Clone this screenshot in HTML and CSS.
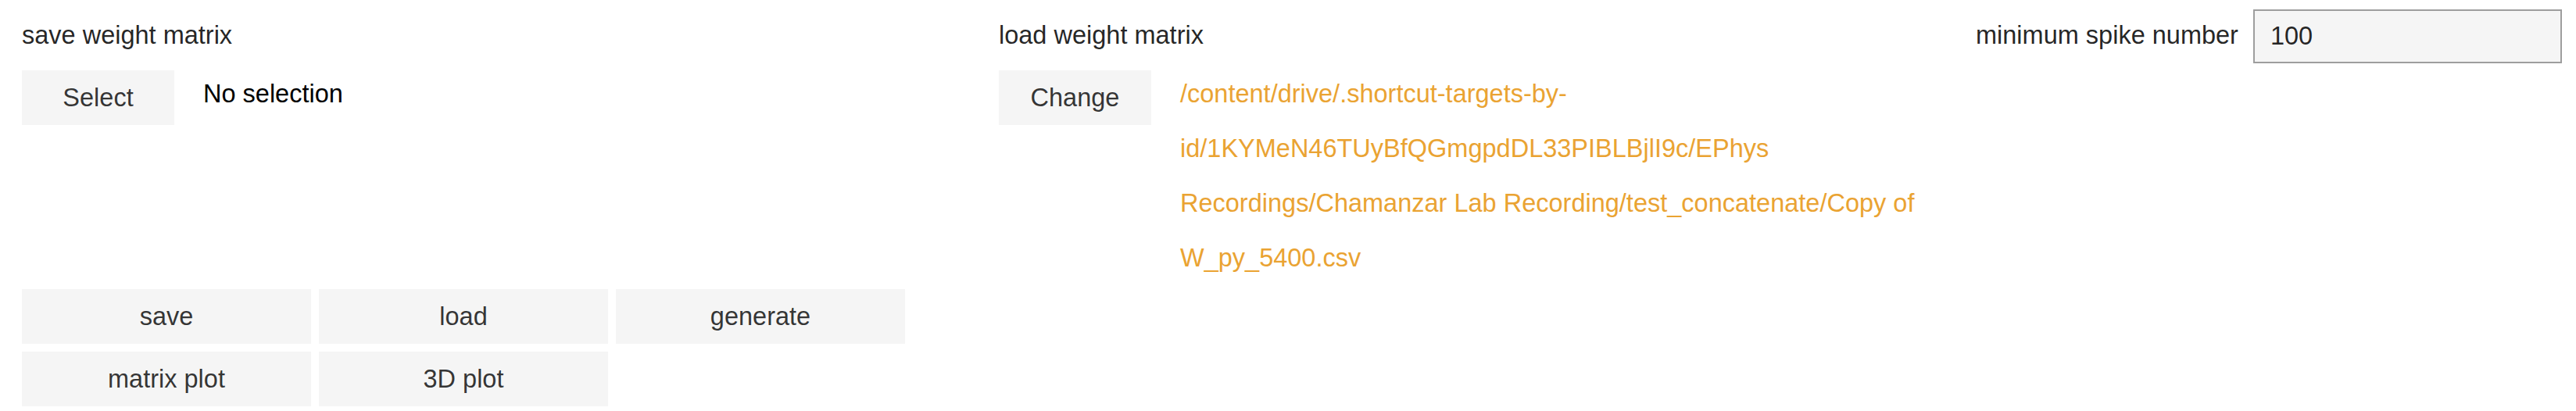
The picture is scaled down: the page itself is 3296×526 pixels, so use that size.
FILE: index.html
```html
<!DOCTYPE html>
<html>
<head>
<meta charset="utf-8">
<link rel="stylesheet" href="styles.css">
</head>
<body>
<div class="app">
  <div class="top">
    <div class="chooser">
      <div class="chooser-title">save weight matrix</div>
      <div class="chooser-row">
        <button class="btn btn-pick">Select</button>
        <div class="chooser-path">No selection</div>
      </div>
    </div>
    <div class="chooser">
      <div class="chooser-title">load weight matrix</div>
      <div class="chooser-row">
        <button class="btn btn-pick">Change</button>
        <div class="chooser-path path-set">/content/drive/.shortcut-targets-by-id/1KYMeN46TUyBfQGmgpdDL33PIBLBjlI9c/EPhys Recordings/Chamanzar Lab Recording/test_concatenate/Copy of W_py_5400.csv</div>
      </div>
    </div>
    <div class="spike">
      <label class="spike-label" for="spike">minimum spike number</label>
      <input class="spike-input" id="spike" type="text" value="100">
    </div>
  </div>
  <div class="actions">
    <button class="btn">save</button>
    <button class="btn">load</button>
    <button class="btn">generate</button>
    <button class="btn">matrix plot</button>
    <button class="btn">3D plot</button>
  </div>
</div>
</body>
</html>
```
FILE: styles.css
```css
html, body {
  margin: 0;
  padding: 0;
  background: #ffffff;
}

.app {
  padding: 5px 0 0 23px;
  font-family: "Liberation Sans", Arial, sans-serif;
  font-size: 32.5px;
  color: rgba(0, 0, 0, 0.87);
}

.top {
  display: flex;
  align-items: flex-start;
}

.chooser {
  width: 1250px;
  flex: 0 0 1250px;
  display: flex;
  flex-direction: column;
}

.chooser-title {
  margin: 5px;
  height: 70px;
  line-height: 70px;
  white-space: nowrap;
}

.chooser-row {
  display: flex;
  align-items: flex-start;
}

.btn {
  border: none;
  outline: none;
  background: #f5f5f5;
  color: rgba(0, 0, 0, 0.8);
  font-family: inherit;
  font-size: 32.5px;
  height: 70px;
  line-height: 70px;
  padding: 0;
  margin: 0;
  text-align: center;
  white-space: nowrap;
}

.btn-pick {
  width: 195px;
  flex: 0 0 195px;
  margin: 5px 0 5px 5px;
}

.chooser-path {
  flex: 1;
  margin: 0 5px 0 37px;
  line-height: 70px;
  color: #000000;
}

.path-set {
  color: #eaa332;
}

.spike {
  display: flex;
  align-items: center;
  width: 750px;
  height: 70px;
  margin: 5px;
}

.spike-label {
  white-space: nowrap;
  margin-right: 19px;
  line-height: 70px;
}

.spike-input {
  flex: 1;
  min-width: 0;
  box-sizing: border-box;
  height: 69px;
  margin-top: 2px;
  border: 2.5px solid #9e9e9e;
  background: #f5f5f5;
  padding: 0 20px;
  font-family: inherit;
  font-size: 32.5px;
  color: rgba(0, 0, 0, 0.87);
  outline: none;
}

.actions {
  display: grid;
  grid-template-columns: repeat(3, 370px);
  grid-auto-rows: 70px;
  gap: 10px;
  margin: 5px;
}
```
